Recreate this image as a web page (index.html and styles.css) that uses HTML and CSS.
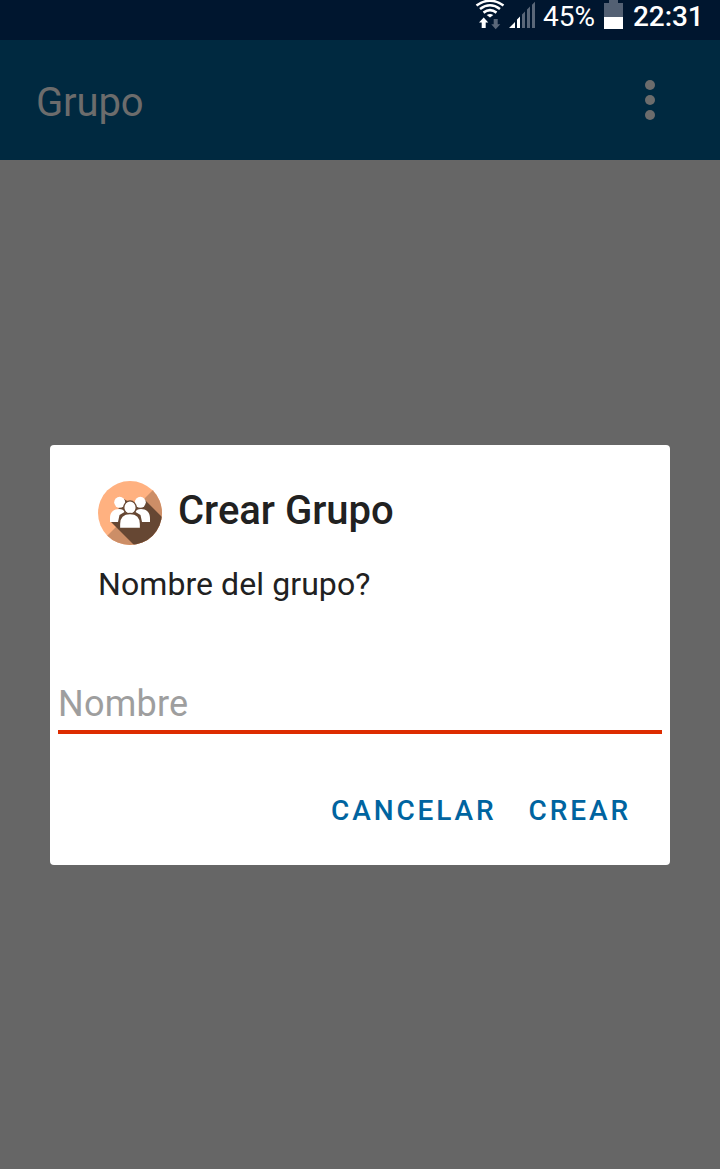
FILE: index.html
```html
<!DOCTYPE html>
<html lang="es">
<head>
<meta charset="utf-8">
<title>Grupo</title>
<link rel="stylesheet" href="styles.css">
</head>
<body>
<div class="screen">
  <div class="status">
    <svg class="signals" width="62" height="40" viewBox="0 0 62 40">
      <g fill="none" stroke="#fff" stroke-width="2.600">
        <path d="M1.500 5.500Q15-4 28.500 5.500"/>
        <path d="M5 9Q15 1.500 25 9"/>
        <path d="M8.500 12.600Q15 7.800 21.500 12.600"/>
      </g>
      <path d="M11.700 15.100Q15 13 18.300 15.100L15 17.600Z" fill="#fff"/>
      <path d="M8.700 17.500L13.300 22.500H10.700V28H6.700V22.500H4Z" fill="#fff"/>
      <path d="M18.700 19H22.700V24.300H25.300L20.700 29.300L16.300 24.300H18.700Z" fill="#5a6779"/>
      <path d="M34 28L40 22V28ZM42 19.500L45 16.500V28H42Z" fill="#fff"/>
      <path d="M47 14.500L50 11.500V28H47ZM52 9.500L55 6.500V28H52ZM57 4.700L60 1.700V28H57Z" fill="#5a6779"/>
    </svg>
    <span class="percent">45%</span>
    <svg class="battery" width="19" height="40" viewBox="0 0 19 40">
      <path d="M5 0H14V3H19V17H0V3H5Z" fill="#536073"/>
      <path d="M0 17H19V29H0Z" fill="#fff"/>
    </svg>
    <span class="clock">22:31</span>
  </div>
  <header class="appbar">
    <span class="heading">Grupo</span>
    <svg class="more" width="12" height="42" viewBox="0 0 12 42" fill="#6c6c6c">
      <circle cx="6" cy="6" r="5"/><circle cx="6" cy="21" r="5"/><circle cx="6" cy="36" r="5"/>
    </svg>
  </header>
  <main class="backdrop">
    <section class="dialog">
      <div class="dialog-head">
        <svg width="64" height="64" viewBox="0 0 64 64">
          <defs><clipPath id="disc"><circle cx="32" cy="32" r="32"/></clipPath></defs>
          <g clip-path="url(#disc)">
            <path d="M0 0H64V64H0Z" fill="#ffb180"/>
            <path d="M64 0V64H0L64 0Z" fill="#cc8e67"/>
            <path d="M13 41L37 65H64V36L46 18L36 24L26 18Z" fill="#664733"/>
          </g>
          <g fill="#fff">
            <circle cx="21.700" cy="21.300" r="5.500"/>
            <circle cx="42.300" cy="21.300" r="5.500"/>
            <path d="M12 41V37C12 31 16 28 21 28C24 28 26 29 26.500 31L21.500 34L20 41Z"/>
            <path d="M52 41V37C52 31 48 28 43 28C40 28 38 29 37.500 31L42.500 34L44 41Z"/>
          </g>
          <g fill="#fff" stroke="#664733" stroke-width="1.300">
            <ellipse cx="32" cy="26.500" rx="6.200" ry="6.600"/>
            <path d="M21.500 47.500V43C21.500 36 25 32.500 32 32.500S42.500 36 42.500 43V47.500Z"/>
          </g>
        </svg>
        <h1 class="title">Crear Grupo</h1>
      </div>
      <p class="message">Nombre del grupo?</p>
      <div class="field">Nombre</div>
      <div class="actions"><span>CANCELAR</span><span>CREAR</span></div>
    </section>
  </main>
</div>
</body>
</html>
```
FILE: styles.css
```css
* { box-sizing: border-box; }
body { margin: 0; font-family: Roboto, sans-serif; background: #666; }
.screen { display: flex; flex-direction: column; height: 1169px; }
.status {
  display: flex;
  justify-content: flex-end;
  height: 40px;
  padding-right: 17px;
  background: #00162f;
  color: #fff;
  font-size: 28px;
  line-height: 33px;
}
.percent { margin-left: 6px; width: 61px; }
.battery { margin-right: 10px; }
.clock { font-weight: 500; width: 70px; white-space: nowrap; letter-spacing: -.1px; }
.appbar {
  display: flex;
  align-items: center;
  justify-content: space-between;
  height: 120px;
  padding: 0 64px 0 36px;
  background: #002940;
}
.heading { margin-top: 5px; font-size: 40px; line-height: 48px; letter-spacing: -.15px; color: #6c6c6c; }
.backdrop { flex: 1; padding: 285px 50px 0; background: #666; }
.dialog {
  display: flex;
  flex-direction: column;
  height: 420px;
  padding-top: 36px;
  border-radius: 4px;
  background: #fff;
  color: #212121;
}
.dialog-head { display: flex; height: 64px; padding-left: 48px; }
.title { margin: 6px 0 0 16px; font-size: 40px; font-weight: 500; line-height: 48px; }
.message { margin: 19px 0 0 48px; font-size: 32px; line-height: 40px; letter-spacing: .08px; }
.field {
  height: 60px;
  margin: 70px 8px 0;
  border-bottom: 4px solid #dd2c00;
  color: #9e9e9e;
  font-size: 36px;
  line-height: 60px;
  letter-spacing: .25px;
}
.actions {
  display: flex;
  justify-content: flex-end;
  gap: 32px;
  margin-top: 57px;
  padding-right: 39px;
  color: #0064a0;
  font-size: 28px;
  font-weight: 500;
  line-height: 40px;
  letter-spacing: 2.9px;
}
```
